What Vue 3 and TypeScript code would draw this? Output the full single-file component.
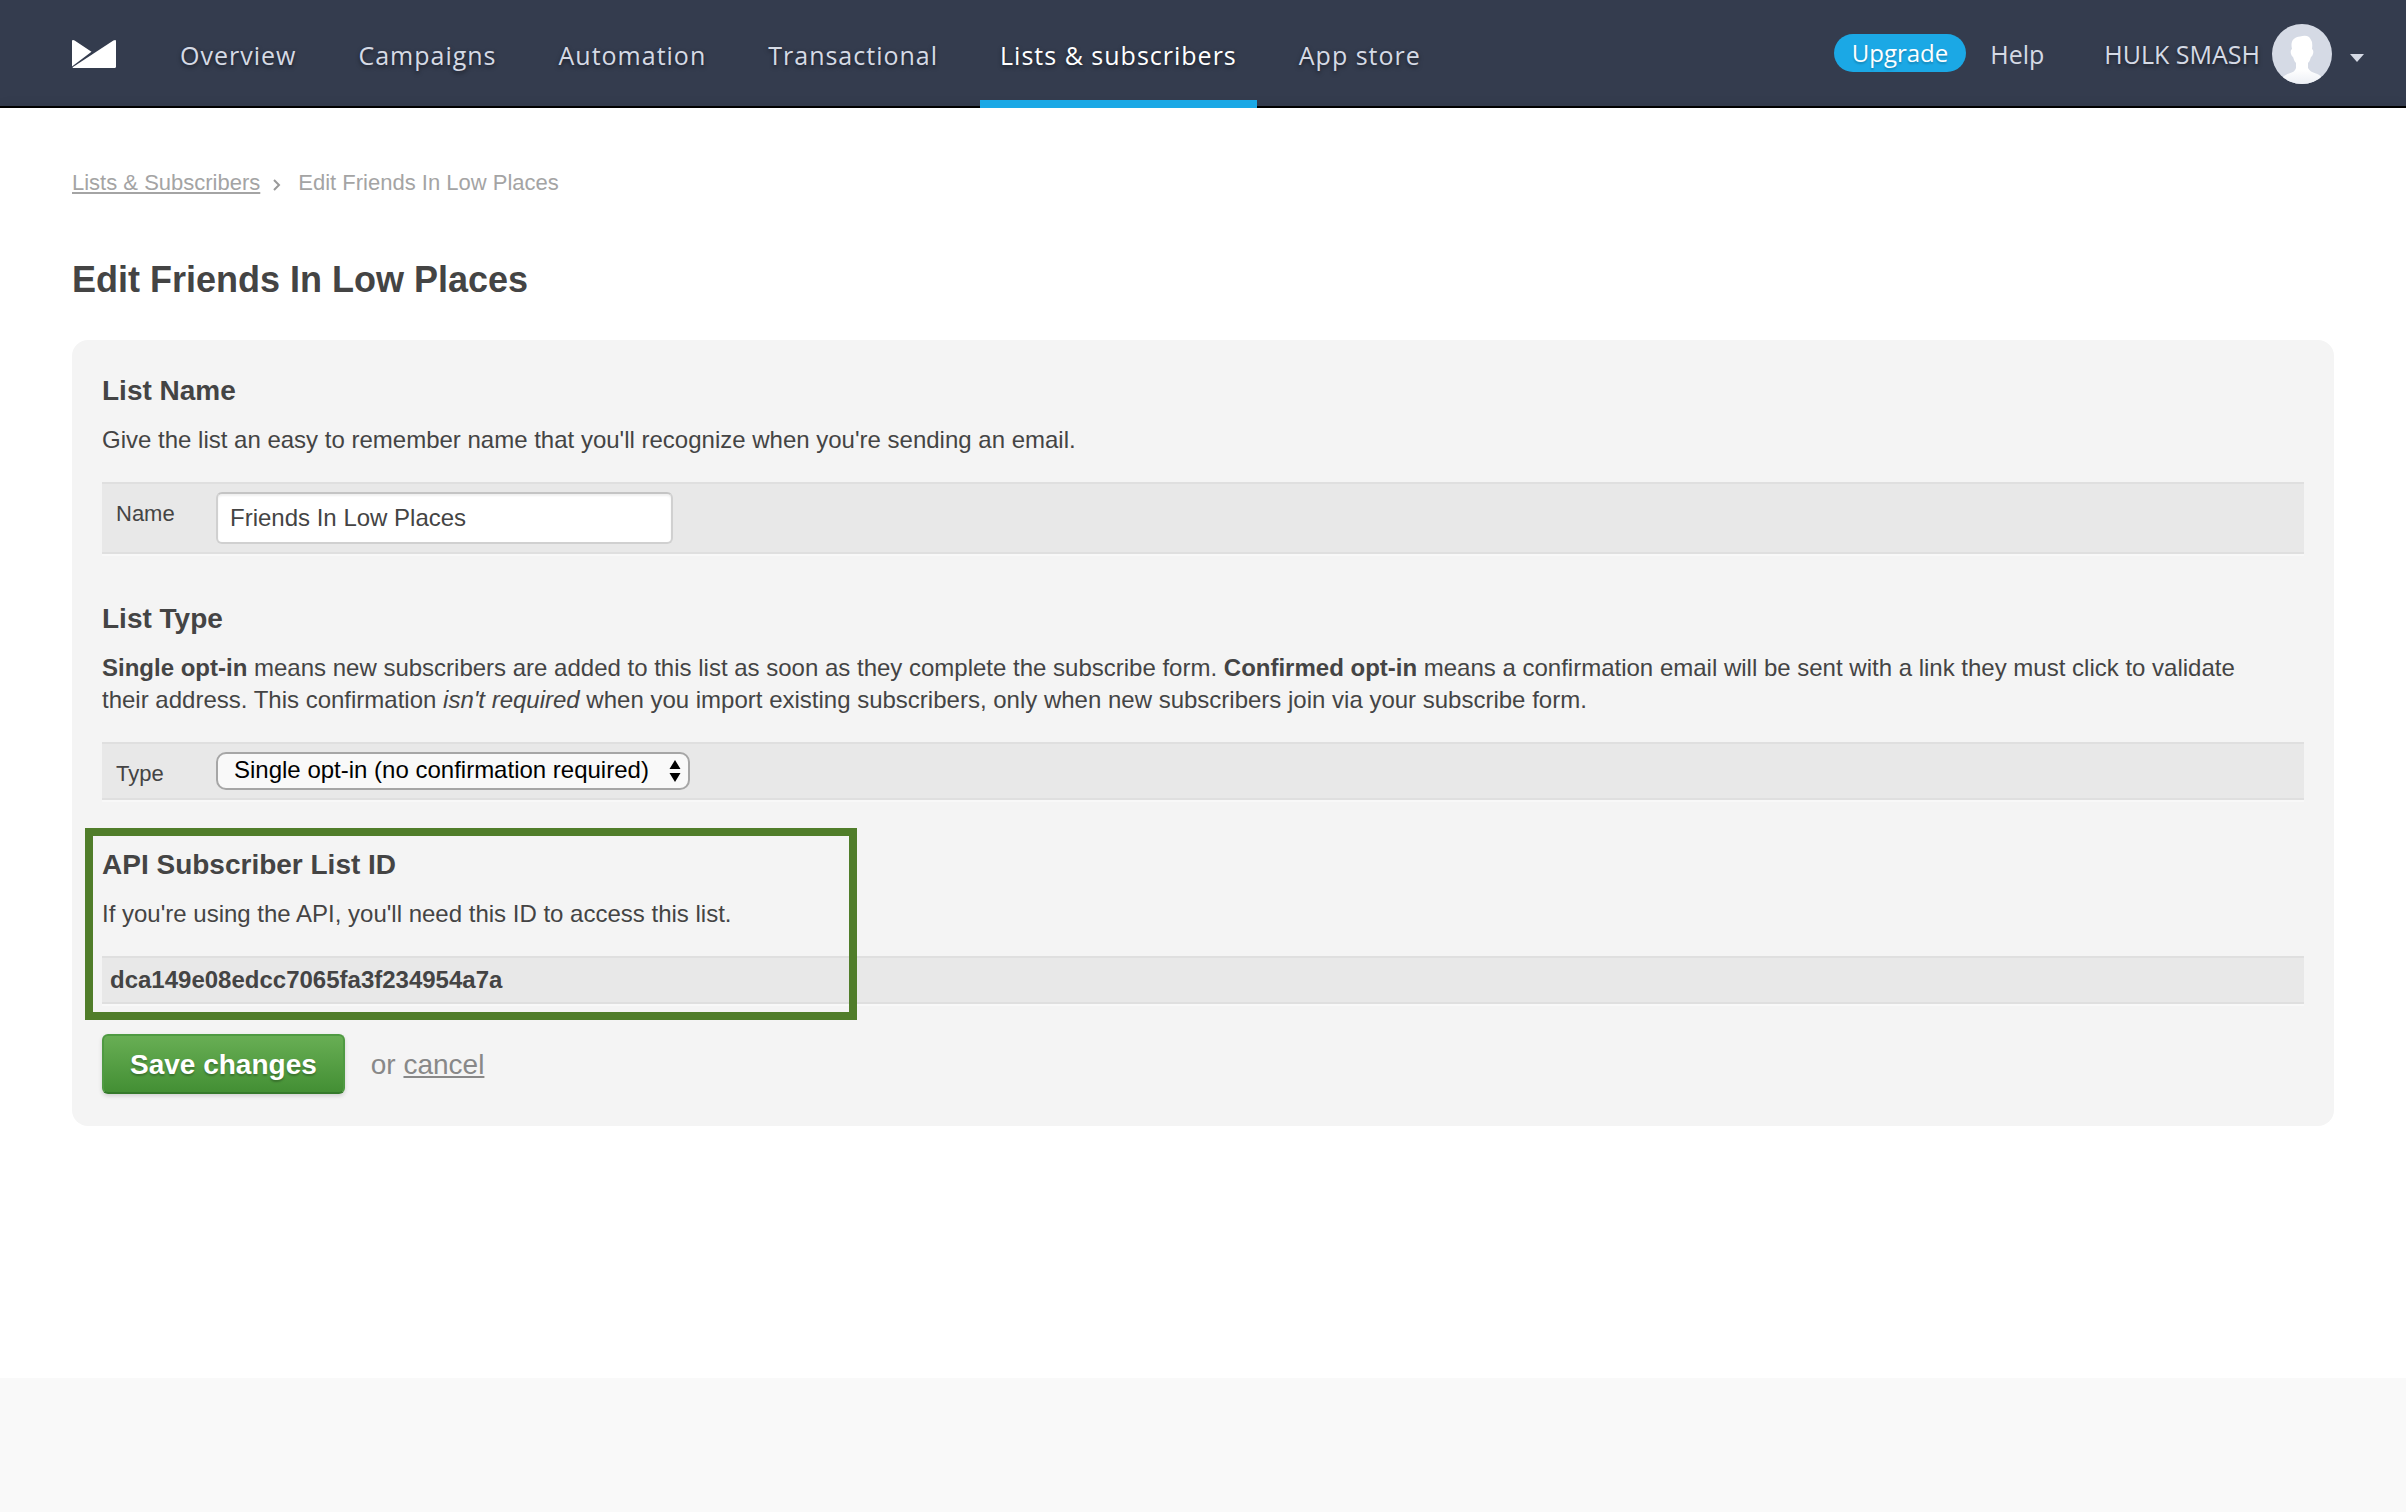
<script setup lang="ts">
import { ref } from 'vue'

interface NavItem {
  label: string
  active?: boolean
}

const navItems: NavItem[] = [
  { label: 'Overview' },
  { label: 'Campaigns' },
  { label: 'Automation' },
  { label: 'Transactional' },
  { label: 'Lists & subscribers', active: true },
  { label: 'App store' },
]

const listName = ref('Friends In Low Places')
const listType = ref('single')
const listId = 'dca149e08edcc7065fa3f234954a7a'
</script>

<template>
  <div class="page">
    <header class="topbar">
      <a class="logo" href="#" aria-label="Home">
        <svg width="44" height="28" viewBox="0 0 44 28" fill="#fff">
          <path d="M0 1Q0 0 1 0Q2 0 3 .8L19.5 11.8L0 26.6Z" />
          <path d="M41.4 .6Q44 -.8 44 1.2V26.5Q44 28 42.5 28H1.2Q0 27.8 1 27Z" />
        </svg>
      </a>
      <nav class="nav">
        <a
          v-for="item in navItems"
          :key="item.label"
          href="#"
          class="nav-link"
          :class="{ active: item.active }"
        >{{ item.label }}</a>
      </nav>
      <div class="account">
        <a class="upgrade" href="#">Upgrade</a>
        <a class="help" href="#">Help</a>
        <button class="user" type="button">
          <span>HULK SMASH</span>
          <svg class="avatar" width="60" height="60" viewBox="0 0 60 60">
            <defs>
              <clipPath id="avatar-clip"><circle cx="30" cy="30" r="30" /></clipPath>
              <linearGradient id="avatar-body" x1="0" y1="0" x2="0" y2="1">
                <stop offset="0.7" stop-color="#fff" />
                <stop offset="1" stop-color="#eceff5" />
              </linearGradient>
            </defs>
            <g clip-path="url(#avatar-clip)">
              <rect width="60" height="60" fill="#d5dae5" />
              <path
                fill="url(#avatar-body)"
                d="M20 25C18 17 22 13 28 12.5Q34 11 37 13L38.5 15Q41 18 40 25Q42 26 41 30Q40 33 39 33Q38 37 36 39V44Q38 48 44 49.5Q49 51 52 56V60H8V56Q12 51 17 49.5Q23 48 24 44V39Q22 37 21 33Q20 33 19 30Q18 26 20 25Z"
              />
            </g>
          </svg>
          <svg class="caret" width="14" height="8" viewBox="0 0 14 8" fill="#d5dae5">
            <path d="M0 0H14L7 8Z" />
          </svg>
        </button>
      </div>
    </header>

    <main class="content">
      <nav class="breadcrumb" aria-label="Breadcrumb">
        <a href="#">Lists &amp; Subscribers</a>
        <svg width="8" height="12" viewBox="0 0 8 12" fill="none" stroke="#999" stroke-width="2">
          <path d="M1 1L6 6L1 11" />
        </svg>
        <span>Edit Friends In Low Places</span>
      </nav>

      <h1>Edit Friends In Low Places</h1>

      <form class="panel" @submit.prevent>
        <section>
          <h2>List Name</h2>
          <p>Give the list an easy to remember name that you'll recognize when you're sending an email.</p>
          <div class="row">
            <label for="list-name">Name</label>
            <input id="list-name" v-model="listName" type="text" />
          </div>
        </section>

        <section>
          <h2>List Type</h2>
          <p>
            <strong>Single opt-in</strong> means new subscribers are added to this list as soon as they
            complete the subscribe form. <strong>Confirmed opt-in</strong> means a confirmation email will
            be sent with a link they must click to validate their address. This confirmation
            <em>isn't required</em> when you import existing subscribers, only when new subscribers join
            via your subscribe form.
          </p>
          <div class="row">
            <label for="list-type">Type</label>
            <div class="select">
              <select id="list-type" v-model="listType">
                <option value="single">Single opt-in (no confirmation required)</option>
                <option value="confirmed">Confirmed opt-in (confirmation required)</option>
              </select>
              <svg width="12" height="22" viewBox="0 0 12 22" fill="#000">
                <path d="M6 0L11.5 9H.5ZM.5 13H11.5L6 22Z" />
              </svg>
            </div>
          </div>
        </section>

        <section class="api">
          <h2>API Subscriber List ID</h2>
          <p>If you're using the API, you'll need this ID to access this list.</p>
          <div class="row code"><strong>{{ listId }}</strong></div>
          <div class="highlight" aria-hidden="true"></div>
        </section>

        <div class="actions">
          <button class="save" type="submit">Save changes</button>
          <span>or <a href="#">cancel</a></span>
        </div>
      </form>
    </main>
  </div>
</template>

<style>
body {
  margin: 0;
  background: #f9f9f9;
}
</style>

<style scoped>
.page {
  font: 24px/32px "Liberation Sans", Arial, sans-serif;
  color: #444;
}

.topbar {
  display: flex;
  align-items: stretch;
  height: 106px;
  padding: 0 42px 0 72px;
  background: #343c4e;
  border-bottom: 2px solid #000;
  font-family: "Open Sans", "Noto Sans", sans-serif;
  font-size: 25px;
  text-shadow: 0 2px 4px rgba(0, 0, 0, 0.5);
}

.topbar a,
.user {
  color: #d5dae5;
  text-decoration: none;
}

.logo {
  display: flex;
  align-items: center;
  margin-right: 44px;
  padding-top: 2px;
}

.nav {
  display: flex;
  gap: 22px;
  margin-bottom: -2px;
}

.nav-link {
  display: flex;
  align-items: center;
  padding: 10px 20px 0;
  border-bottom: 8px solid transparent;
  letter-spacing: 1px;
}

.topbar .nav-link.active {
  color: #fff;
  border-bottom-color: #1ba8e5;
}

.account {
  display: flex;
  align-items: center;
  margin-left: auto;
  padding-top: 2px;
}

.topbar .upgrade {
  height: 38px;
  margin-bottom: 2px;
  padding: 0 18px;
  border-radius: 19px;
  background: #1ba8e5;
  color: #fff;
  font-size: 24px;
  line-height: 38px;
  text-shadow: 0 2px 2px rgba(0, 0, 0, 0.2);
}

.help {
  margin: 0 60px 0 24px;
  text-shadow: none;
}

.user {
  display: flex;
  align-items: center;
  padding: 0;
  border: 0;
  background: none;
  font: inherit;
  text-shadow: inherit;
}

.avatar {
  margin: 0 18px 0 12px;
}

.caret {
  margin-top: 8px;
}

.content {
  padding: 59px 72px 252px;
  background: #fff;
  box-shadow: 0 0 14px rgba(0, 0, 0, 0.08);
}

.breadcrumb {
  display: flex;
  align-items: center;
  font-size: 22px;
  color: #a4a4a4;
}

.breadcrumb a,
.actions a {
  color: inherit;
  text-decoration-thickness: 2px;
  text-underline-offset: 2px;
}

.breadcrumb svg {
  margin: 4px 17px 0 13px;
}

h1 {
  margin: 61px 0 40px;
  font-size: 36px;
  line-height: 40px;
}

.panel {
  padding: 35px 30px 32px;
  border-radius: 16px;
  background: #f4f4f4;
}

section + section {
  margin-top: 49px;
}

h2 {
  margin: 0 0 17px;
  font-size: 28px;
  line-height: 32px;
}

p {
  margin: 0 0 26px;
  padding-right: 30px;
}

.row {
  display: flex;
  align-items: flex-start;
  padding: 8px 14px;
  border: solid #dfdfdf;
  border-width: 2px 0;
  background: #e8e8e8;
  box-shadow: 0 2px 0 #f8f8f8;
}

.row label {
  width: 100px;
  padding-top: 6px;
  font-size: 22px;
}

.row input {
  box-sizing: border-box;
  width: 457px;
  height: 52px;
  padding: 0 12px;
  border: 2px solid #d0d0d0;
  border-top-color: #c4c4c4;
  border-radius: 6px;
  background: #fff;
  box-shadow: inset 0 2px 2px #f0f0f0;
  color: #444;
  font: inherit;
}

.select {
  position: relative;
}

.select select {
  display: block;
  appearance: none;
  box-sizing: border-box;
  width: 474px;
  height: 38px;
  padding: 0 36px 2px 16px;
  border: 2px solid #a6a6a6;
  border-radius: 10px;
  background: #f9f9f9;
  color: #000;
  font: inherit;
}

.select svg {
  position: absolute;
  top: 8px;
  right: 9px;
  pointer-events: none;
}

.api {
  position: relative;
}

.row.code {
  padding: 6px 8px;
}

.highlight {
  position: absolute;
  top: -21px;
  bottom: -16px;
  left: -17px;
  box-sizing: border-box;
  width: 772px;
  border: 8px solid #507d2a;
  pointer-events: none;
}

.actions {
  display: flex;
  align-items: center;
  gap: 26px;
  margin-top: 30px;
  color: #888;
  font-size: 28px;
}

.actions span {
  padding-top: 2px;
}

.save {
  box-sizing: border-box;
  height: 60px;
  padding: 2px 26px 0;
  border: 2px solid #4f9a42;
  border-bottom-color: #357a2b;
  border-radius: 6px;
  background: linear-gradient(#68ae54, #438f34);
  box-shadow: 0 2px 4px rgba(0, 0, 0, 0.15);
  color: #fff;
  font: bold 28px/32px "Liberation Sans", Arial, sans-serif;
  text-shadow: 0 2px 2px rgba(0, 0, 0, 0.25);
}
</style>
